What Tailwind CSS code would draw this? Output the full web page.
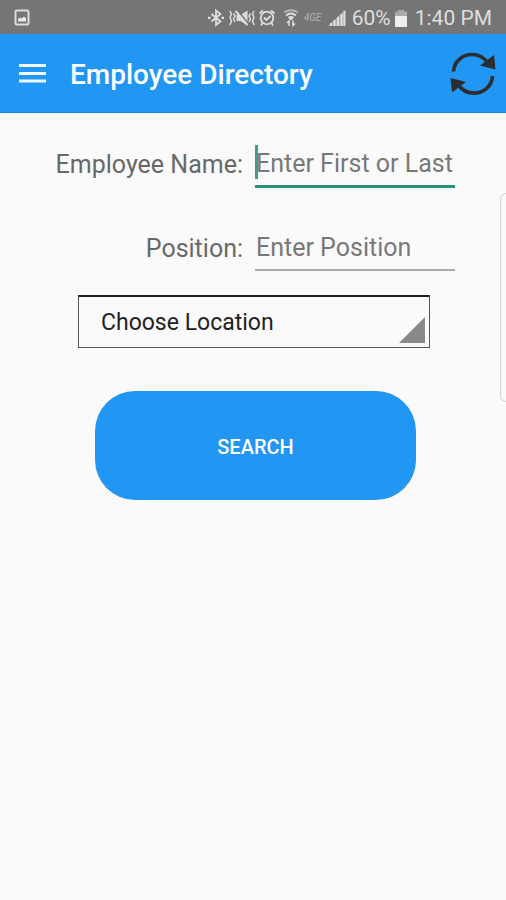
<!DOCTYPE html>
<html lang="en">
<head>
<meta charset="utf-8">
<meta name="viewport" content="width=device-width, initial-scale=1">
<title>Employee Directory</title>
<script src="https://cdn.jsdelivr.net/npm/@tailwindcss/browser@4"></script>
</head>
<body class="relative min-h-screen bg-[#fafafa] font-[Roboto,sans-serif] text-[#686868]">
<div class="flex h-[34px] items-center bg-[#757575] pt-0.5 pr-3.5 pl-3.5 text-[#dedede]">
  <svg class="mr-auto h-[18px] w-[17px]" viewBox="0 0 17 18" aria-hidden="true"><rect x="1.5" y="1.5" width="13" height="14" rx="1.5" fill="none" stroke="#dedede" stroke-width="2"/><path d="M4 12.500V10l2-1.500 1.500 1L10 7.500l2 1.500v3.500z" fill="#e8e8e8"/></svg>
  <div class="flex items-center">
    <svg class="mr-0.5 h-5 w-5" viewBox="0 0 20 20" fill="none" stroke="#dedede" stroke-width="1.800" aria-hidden="true"><path d="M5.500 6l9 7.500L10 17V2.500l4.500 3.500-9 7.500"/><path d="M2 9.800h2.500M15.500 9.800H18" stroke-width="2.200"/></svg>
    <svg class="h-5 w-7" viewBox="0 0 28 20" fill="none" stroke="#dedede" stroke-width="1.500" aria-hidden="true"><path d="M2 3l1.500 3L2 9.500 3.500 13 2 17M5.500 5.500L7 8l-1.500 3L7 14M22.500 5.500L21 8l1.500 3-1.500 3M26 3l-1.500 3L26 9.500 24.500 13l1.500 4"/><path d="M8.500 7h4l7-4.500v15l-7-4.500h-4z" fill="#dedede" stroke="none"/><path d="M9 2.500l12 14" stroke="#757575" stroke-width="2"/><path d="M7.500 3l12 14" stroke-width="2"/></svg>
    <svg class="mr-1.5 ml-0.5 h-5 w-[18px]" viewBox="0 0 18 20" fill="none" stroke="#dedede" stroke-width="1.800" aria-hidden="true"><circle cx="9" cy="10" r="6.300"/><path d="M6 9.500l2.500 2.500 4-4M1.500 5.500L5 2.500M16.500 5.500L13 2.500M4.500 15L3 17.500M13.500 15l1.500 2.500"/></svg>
    <svg class="mr-1 h-5 w-[18px]" viewBox="0 0 18 20" fill="none" stroke="#dedede" stroke-width="1.800" aria-hidden="true"><path d="M2 4.500q7-4.500 14 0" stroke="#b5b5b5" stroke-width="2"/><path d="M4 7.500q5-4 10 0M6.500 10q2.500-2 5 0" stroke-width="2"/><path d="M9 9v3" stroke-width="2.500"/><path d="M7 18v-5l-2 2M11 12.500v5l2-2" stroke-width="1.500"/></svg>
    <span class="mr-0.5 w-[22px] text-[10px] leading-4 font-medium text-[#a8a8a8] italic">4GE</span>
    <svg class="mr-1.5 h-5 w-[18px]" viewBox="0 0 18 20" aria-hidden="true"><path d="M0 18L17 2v16z" fill="#aaa"/><path d="M3 18v-3M6.500 18v-6M10 18V9M13.500 18V6M16.500 18V3" stroke="#dedede" stroke-width="2"/></svg>
    <span class="text-[21px] leading-6">60%</span>
    <svg class="mx-1 h-[18px] w-3" viewBox="0 0 12 18" aria-hidden="true"><path d="M3 1h6v1.500h3V18H0V2.500h3z" fill="#aaa"/><path d="M0 7h12v11H0z" fill="#eee"/></svg>
    <span class="ml-1 text-[21px] leading-6">1:40 PM</span>
  </div>
</div>
<header class="flex h-[79px] items-center border-b border-[#1b82dc] bg-[#2196f3] pr-2.5 pl-[19px]">
  <button type="button" aria-label="Open menu"><svg class="h-5 w-[27px]" viewBox="0 0 27 20" aria-hidden="true"><path d="M0 2.500h27M0 10.500h27M0 18h27" stroke="#f1f8ff" stroke-width="3"/></svg></button>
  <h1 class="ml-6 pt-1 text-[28px] leading-8 font-medium text-white">Employee Directory</h1>
  <button type="button" class="ml-auto" aria-label="Refresh"><svg class="h-[46px] w-[46px]" viewBox="0 0 46 46" aria-hidden="true"><g id="arc"><path d="M3.500 21.500C4 11 13 4.500 22 4.500c7 0 12 3 16 8.500" fill="none" stroke="#2b2d2e" stroke-width="3.600"/><path d="M44 5l1.500 14.500-15.500-4z" fill="#2b2d2e"/></g><use href="#arc" transform="rotate(180 23 23.800)"/></svg></button>
</header>
<main>
  <form class="pt-8">
    <div class="grid grid-cols-[1fr_200px] gap-x-3 gap-y-[41px] pr-[51px] text-[25px] leading-9">
      <label for="name" class="pt-0.5 text-right">Employee Name:</label>
      <div class="relative border-b-[3px] border-[#27947f] pb-1">
        <input id="name" type="text" placeholder="Enter First or Last" class="block h-9 w-full bg-transparent pt-0.5 pl-px outline-none placeholder:text-[#787878]">
        <span class="absolute top-0 left-0 h-[34px] w-[3px] bg-[#27947f]/90"></span>
      </div>
      <label for="position" class="pt-0.5 text-right">Position:</label>
      <div class="border-b-2 border-[#aaa] pb-1">
        <input id="position" type="text" placeholder="Enter Position" class="block h-9 w-full bg-transparent pt-0.5 pl-px outline-none placeholder:text-[#787878]">
      </div>
    </div>
    <div class="relative mt-6 mr-[76px] ml-[78px]">
      <select aria-label="Location" class="block h-[53px] w-full appearance-none border border-t-2 border-[#555] border-t-[#222] bg-transparent px-[22px] pt-0.5 text-[23px] text-[#222]"><option>Choose Location</option></select>
      <svg class="pointer-events-none absolute right-[5px] bottom-[5px] h-[26px] w-[26px]" viewBox="0 0 26 26" aria-hidden="true"><path d="M0 26L26 0v26z" fill="#888"/></svg>
    </div>
    <div class="mt-[43px] mr-[90px] ml-[95px]">
      <button type="submit" class="block h-[109px] w-full rounded-[40px] bg-[#2196f3] pt-0.5 text-[20px] font-medium text-white">SEARCH</button>
    </div>
  </form>
</main>
<div class="absolute top-[193px] right-0 h-[209px] w-1.5 rounded-l-lg border border-r-0 border-[#d5d5d5]"></div>
</body>
</html>
